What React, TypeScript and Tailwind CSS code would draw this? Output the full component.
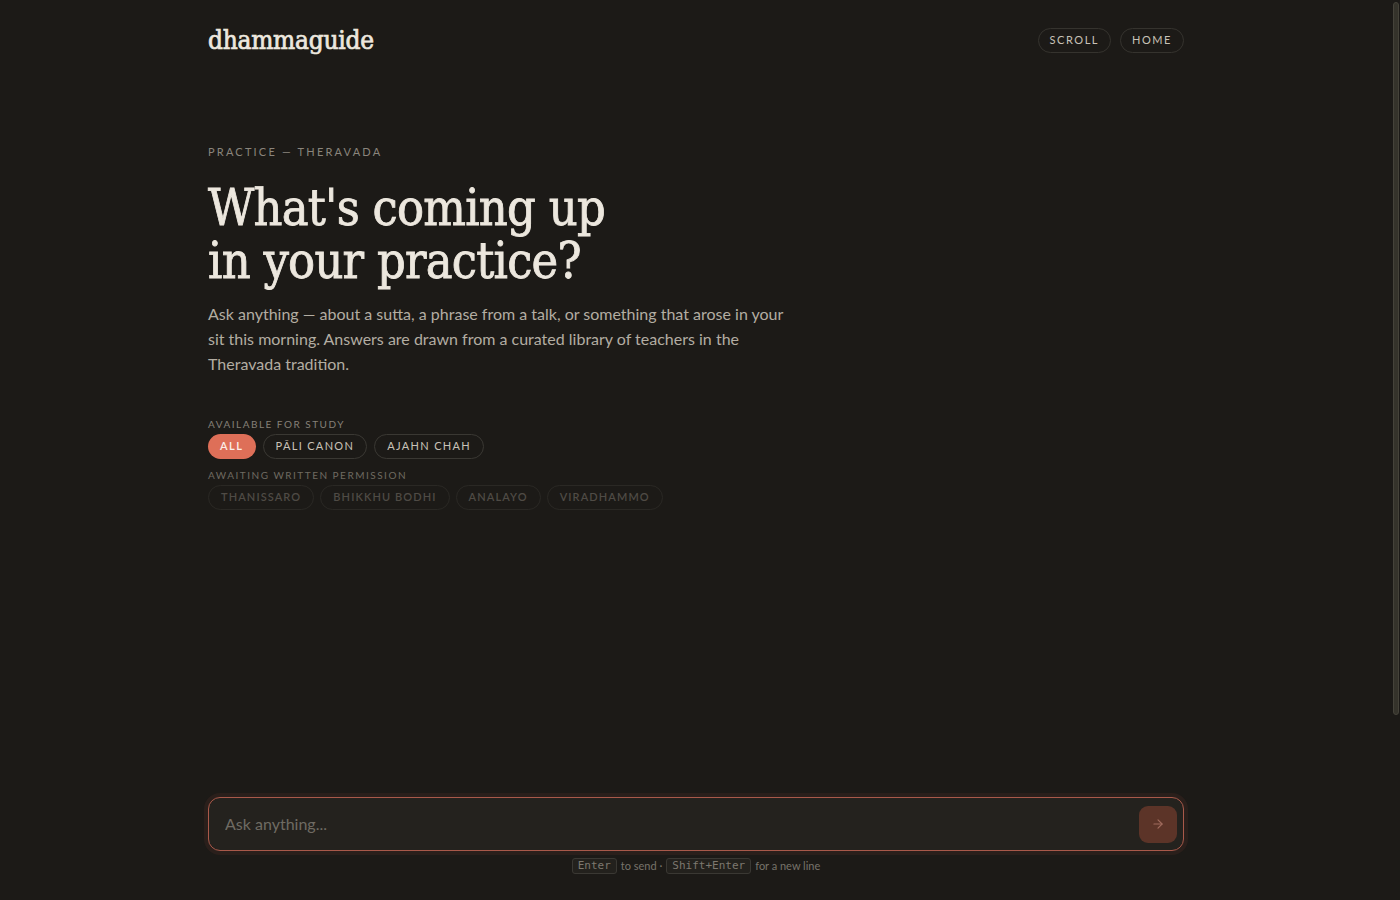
import { ArrowRight } from 'lucide-react'

const available = ['All', 'Pāli Canon', 'Ajahn Chah']
const pending = ['Thanissaro', 'Bhikkhu Bodhi', 'Analayo', 'Viradhammo']

const sans = "font-['Lato','Inter',sans-serif]"
const serif = "font-['DejaVu_Serif_Condensed','DejaVu_Serif',serif]"

function Kbd({ children }: { children: string }) {
  return (
    <span className="inline-block rounded-[3px] border border-[#3a3833] bg-[#23211d] px-[5px] font-['DejaVu_Sans_Mono',monospace] text-[11px] leading-[14px] text-[#7d786f]">
      {children}
    </span>
  )
}

export default function App() {
  return (
    <div className={`flex h-screen bg-[#1c1a17] text-[#ece7de] ${sans}`}>
      <div className="flex-1 overflow-y-auto [scrollbar-width:none]">
        <div className="mx-auto flex min-h-[1020px] max-w-5xl flex-col px-6">
          <header className="flex h-20 items-center justify-between">
            <span className={`${serif} text-[26px] tracking-[-0.01em] text-[#ece7de] [-webkit-text-stroke:0.7px_#ece7de]`}>
              dhammaguide
            </span>
            <nav className="flex gap-[9px]">
              {['Scroll', 'Home'].map((l) => (
                <button
                  key={l}
                  className="h-[25px] rounded-full border border-[#35332e] px-[11px] text-[11px] uppercase tracking-[0.14em] text-[#c8c2b7]"
                >
                  {l}
                </button>
              ))}
            </nav>
          </header>

          <main className="pt-16">
            <p className="text-[11px] uppercase leading-4 tracking-[0.2em] text-[#8a857c]">
              Practice — Theravada
            </p>
            <h1 className={`${serif} mt-[22px] text-[50px] leading-[53px] tracking-[-0.015em] text-[#ece7de] [-webkit-text-stroke:0.8px_#ece7de]`}>
              What's coming up
              <br />
              in your practice?
            </h1>
            <p className="mt-[13px] max-w-[580px] text-[16px] leading-[25px] text-[#b3ada2]">
              Ask anything — about a sutta, a phrase from a talk, or something that arose in your sit this
              morning. Answers are drawn from a curated library of teachers in the Theravada tradition.
            </p>

            <div className="mt-[40px]">
              <p className="text-[10px] uppercase leading-4 tracking-[0.15em] text-[#858077]">
                Available for study
              </p>
              <div className="mt-[2px] flex gap-[7px]">
                {available.map((t, i) => (
                  <button
                    key={t}
                    className={
                      i === 0
                        ? 'h-[25px] rounded-full bg-[#de6f58] px-3 text-[11px] font-semibold uppercase tracking-[0.14em] text-[#fbeee8]'
                        : 'h-[25px] rounded-full border border-[#3a3833] px-3 text-[11px] uppercase tracking-[0.12em] text-[#c8c2b7]'
                    }
                  >
                    {t}
                  </button>
                ))}
              </div>
              <p className="mt-[8px] text-[10px] uppercase leading-4 tracking-[0.15em] text-[#6f6a61]">
                Awaiting written permission
              </p>
              <div className="mt-[2px] flex gap-[6px]">
                {pending.map((t) => (
                  <span
                    key={t}
                    className="flex h-[25px] items-center rounded-full border border-[#2a2824] px-3 text-[11px] font-semibold uppercase tracking-[0.1em] text-[#4f4b45]"
                  >
                    {t}
                  </span>
                ))}
              </div>
            </div>
          </main>
        </div>

        <footer className="sticky bottom-0 bg-[#1c1a17] pb-[26px] pt-[10px]">
          <div className="mx-auto max-w-5xl px-6">
            <div className="flex h-[54px] items-center rounded-[12px] border border-[#a9594a] bg-[#24221e] pl-4 pr-[6px] shadow-[0_0_0_4px_#2a1f1b]">
              <input
                placeholder="Ask anything..."
                className="flex-1 bg-transparent text-[16px] text-[#ece7de] outline-none placeholder:text-[#6f6b63]"
              />
              <button className="flex h-[37px] w-[38px] items-center justify-center rounded-[9px] bg-[#5c3428] text-[#a06b5d]">
                <ArrowRight size={14} strokeWidth={2} />
              </button>
            </div>
            <p className="mt-[7px] flex items-center justify-center gap-1 text-[11px] leading-4 text-[#77736a]">
              <Kbd>Enter</Kbd>
              <span>to send ·</span>
              <Kbd>Shift+Enter</Kbd>
              <span>for a new line</span>
            </p>
          </div>
        </footer>
      </div>

      {/* scroll rail */}
      <div className="relative w-2">
        <div className="absolute left-[1px] right-[1px] top-[2px] h-[713px] rounded-full border border-[#45433a] bg-[#35332b]" />
      </div>
    </div>
  )
}
